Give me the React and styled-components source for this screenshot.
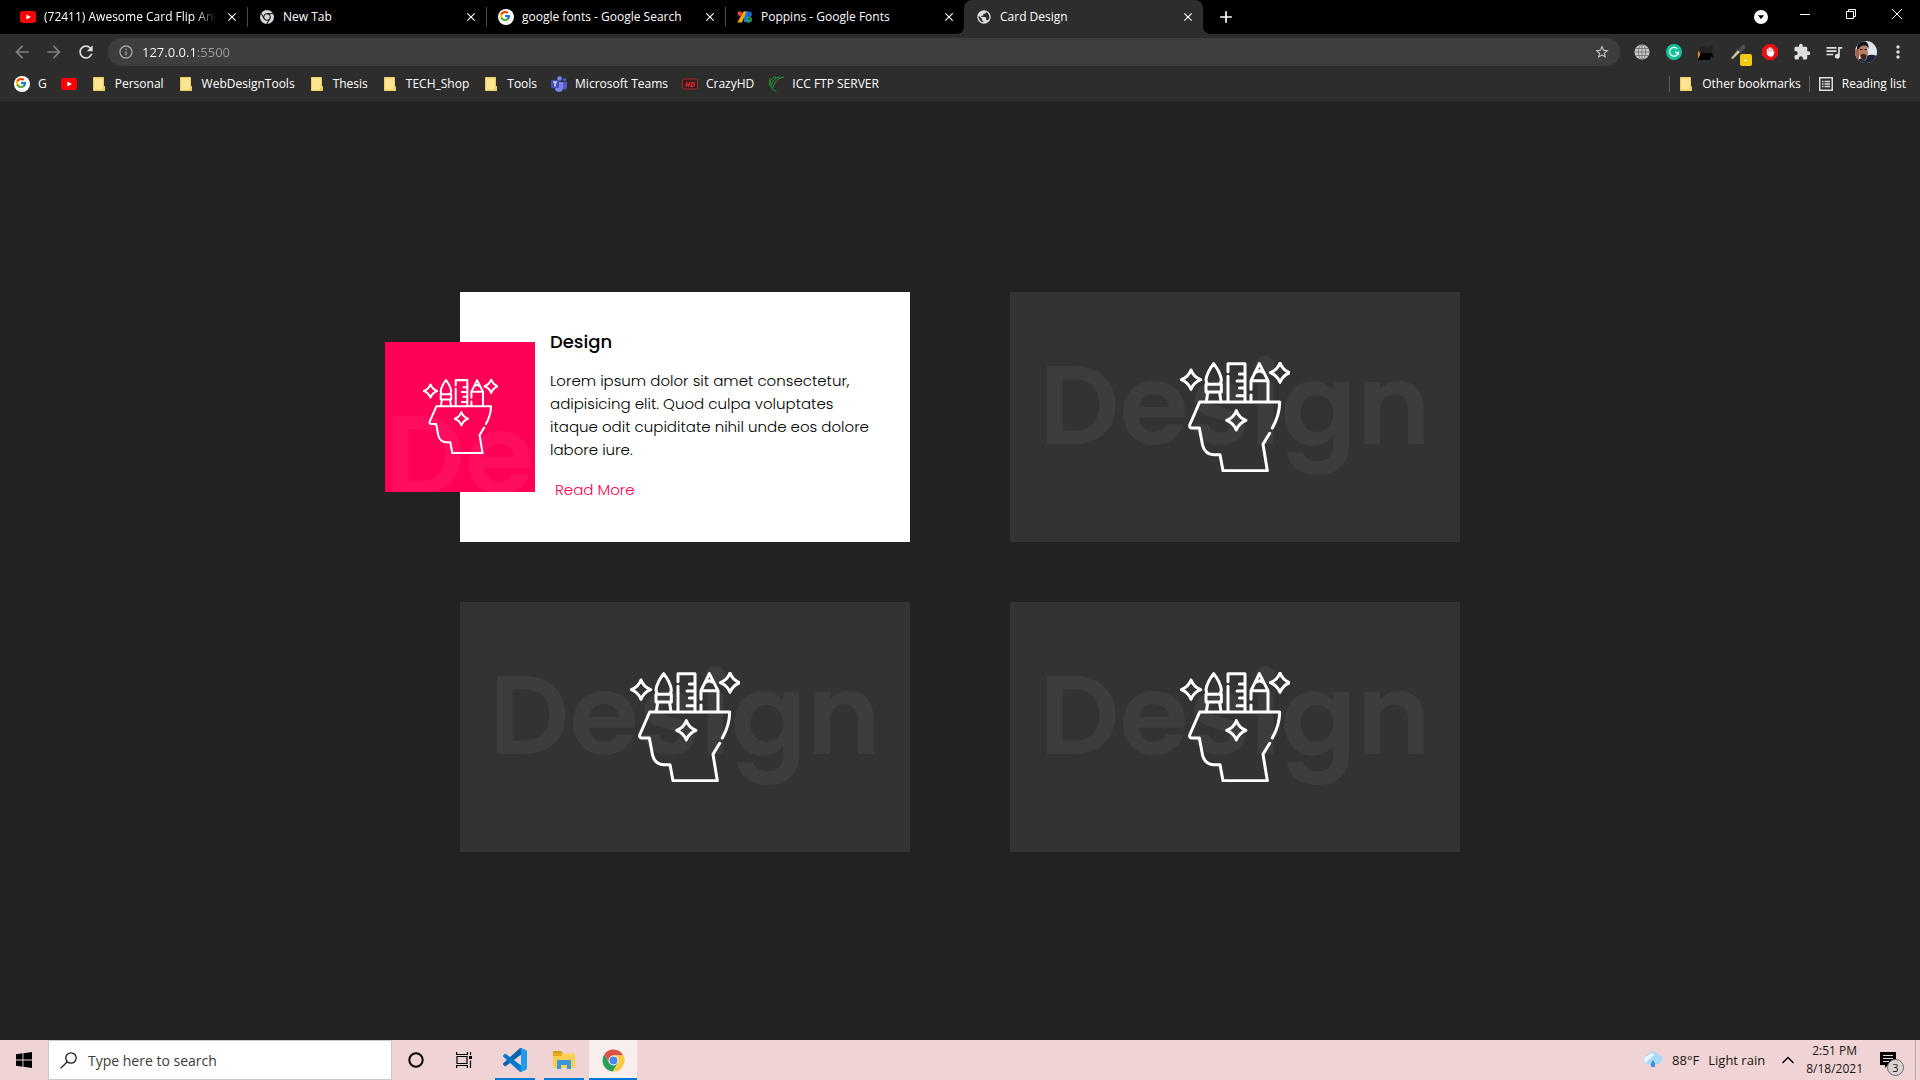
import React from "react";
import styled, { createGlobalStyle, css } from "styled-components";
import { FcGoogle } from "react-icons/fc";
import {
  MdAdd,
  MdArrowBack,
  MdArrowForward,
  MdClose,
  MdExtension,
  MdInfoOutline,
  MdMoreVert,
  MdPublic,
  MdQueueMusic,
  MdRefresh,
  MdStarBorder,
} from "react-icons/md";

const uiFont = `"Segoe UI", "Open Sans", "Noto Sans", sans-serif`;
const pageFont = `Poppins, Inter, "Open Sans", sans-serif`;

const GlobalStyle = createGlobalStyle`
  *, *::before, *::after { box-sizing: border-box; }
  body { margin: 0; background: #222222; font-family: ${uiFont}; }
  h1, h2, p { margin: 0; }
  button, input { font: inherit; color: inherit; border: 0; padding: 0; background: none; outline: none; }
  a { text-decoration: none; color: inherit; }
  svg { display: block; flex: none; }
`;

const Screen = styled.div`
  display: flex;
  flex-direction: column;
  min-height: 100vh;
`;

/* ---------- browser chrome ---------- */

const Browser = styled.header`
  background: #2d2d2d;
  border-bottom: 1px solid #242022;
  color: #ffffff;
  font-size: 12px;
`;

const TabStrip = styled.div`
  display: flex;
  height: 34px;
  padding-left: 8px;
  background: #000000;
`;

const Tab = styled.div`
  position: relative;
  display: flex;
  align-items: center;
  gap: 8px;
  width: 239px;
  padding: 0 7px 0 12px;

  ${(p) =>
    p.$divider &&
    css`
      background: linear-gradient(#4a4a4a, #4a4a4a) left center / 1px 20px no-repeat;
    `}

  ${(p) =>
    p.$active &&
    css`
      background: #2d2d2d;
      border-radius: 8px 8px 0 0;

      &::before,
      &::after {
        content: "";
        position: absolute;
        bottom: 0;
        width: 8px;
        height: 8px;
      }
      &::before {
        right: 100%;
        background: radial-gradient(circle at 0 0, #000000 8px, #2d2d2d 8px);
      }
      &::after {
        left: 100%;
        background: radial-gradient(circle at 100% 0, #000000 8px, #2d2d2d 8px);
      }
    `}
`;

const TabTitle = styled.button`
  display: flex;
  flex: 1;
  align-items: center;
  gap: 8px;
  min-width: 0;
  height: 100%;
  text-align: left;
`;

const TabText = styled.span`
  flex: 1;
  overflow: hidden;
  white-space: nowrap;
  line-height: 16px;
  mask-image: ${(p) => (p.$fade ? "linear-gradient(90deg, #000 88%, transparent)" : "none")};
`;

const IconButton = styled.button`
  display: grid;
  flex: none;
  place-items: center;
  width: ${(p) => p.$size || 32}px;
  height: ${(p) => p.$size || 32}px;
  color: ${(p) => p.$color || "#dedede"};
`;

const NewTab = styled(IconButton)`
  align-self: center;
  margin-left: 7px;
`;

const WindowControls = styled.div`
  display: flex;
  margin-left: auto;
`;

const WindowButton = styled.button`
  display: grid;
  place-items: center;
  width: 46px;
  height: 28px;
`;

const TabSearch = styled(WindowButton)`
  width: 42px;
  height: 34px;
`;

const Toolbar = styled.div`
  display: flex;
  align-items: center;
  height: 36px;
  padding: 0 6px;
`;

const AddressBar = styled.form`
  display: flex;
  flex: 1;
  align-items: center;
  height: 28px;
  margin: 0 6px;
  padding: 0 2px 0 10px;
  border-radius: 14px;
  background: #3e3e3e;
  color: #a6a6a6;
`;

const AddressInput = styled.input`
  flex: 1;
  min-width: 0;
  height: 28px;
  margin-left: 8px;
  font-size: 13px;
  color: transparent;
  background: linear-gradient(90deg, #ffffff ${(p) => p.$hostWidth}px, #9e9e9e ${(p) => p.$hostWidth}px);
  background-clip: text;
`;

const BookmarkBar = styled.nav`
  display: flex;
  align-items: center;
  gap: 14px;
  height: 32px;
  padding: 0 14px 4px;
`;

const Bookmark = styled.a`
  display: flex;
  align-items: center;
  gap: 8px;
  line-height: 16px;
  white-space: nowrap;
`;

const BookmarkEnd = styled.div`
  display: flex;
  align-items: center;
  gap: 8px;
  margin-left: auto;
`;

const BarDivider = styled.span`
  width: 1px;
  height: 16px;
  background: #5c5c5c;
`;

/* ---------- page ---------- */

const Page = styled.main`
  display: grid;
  flex: 1;
  place-content: center;
  grid-template-columns: repeat(2, 450px);
  gap: 60px 100px;
  font-family: ${pageFont};
`;

const Card = styled.article`
  position: relative;
  display: grid;
  height: 250px;
  background: ${(p) => (p.$open ? "#ffffff" : "#333333")};
`;

const Face = styled.div`
  display: grid;
  grid-template: 100% / 100%;
  overflow: hidden;
  place-items: center;
  background: #333333;

  > * {
    grid-area: 1 / 1;
  }

  ${(p) =>
    p.$open &&
    css`
      position: absolute;
      top: 50px;
      left: -75px;
      width: 150px;
      height: 150px;
      background: #ff0057;
    `}
`;

const Watermark = styled.span`
  align-self: start;
  justify-self: ${(p) => (p.$open ? "start" : "center")};
  margin-top: 29px;
  font-size: 112px;
  font-weight: 600;
  line-height: 168px;
  color: rgba(255, 255, 255, 0.05);
`;

const CardBody = styled.div`
  display: flex;
  flex-direction: column;
  align-items: flex-start;
  justify-content: center;
  padding: 0 30px 0 90px;
  color: #000000;
  font-size: 15px;
  font-weight: 300;
  line-height: 23px;
`;

const CardTitle = styled.h2`
  margin-bottom: 14px;
  font-size: 18px;
  font-weight: 500;
  line-height: 27px;
`;

const ReadMore = styled.a`
  margin-top: 12px;
  padding: 5px;
  color: #ff0057;
`;

/* ---------- taskbar ---------- */

const Taskbar = styled.footer`
  display: flex;
  height: 40px;
  background: #f0d4d5;
  color: #1a1414;
`;

const TaskButton = styled.button`
  display: grid;
  place-items: center;
  width: 48px;
  height: 40px;
`;

const AppList = styled.div`
  display: flex;
  gap: 1px;
  padding-left: 3px;
`;

const AppButton = styled(TaskButton)`
  position: relative;
  background: ${(p) => (p.$active ? "#f8eeee" : "none")};

  &::after {
    content: "";
    position: absolute;
    right: ${(p) => (p.$active ? 0 : 4)}px;
    bottom: 0;
    left: ${(p) => (p.$active ? 0 : 4)}px;
    height: 2px;
    background: #0078d7;
  }
`;

const Search = styled.label`
  display: flex;
  align-items: center;
  gap: 11px;
  width: 344px;
  padding-left: 11px;
  border: 1px solid #c9c6c6;
  background: #ffffff;
`;

const SearchInput = styled.input`
  flex: 1;
  min-width: 0;
  font-size: 14px;

  &::placeholder {
    color: #3c3c3c;
    opacity: 1;
  }
`;

const Tray = styled.div`
  display: flex;
  align-items: center;
  margin-left: auto;
`;

const Weather = styled.button`
  display: flex;
  align-items: center;
  gap: 9px;
  font-size: 13px;
  line-height: 20px;
`;

const TrayArrow = styled.button`
  margin: 0 12px 0 17px;
`;

const Clock = styled.time`
  font-size: 12px;
  line-height: 18px;
  text-align: center;
`;

const Notifications = styled.button`
  position: relative;
  width: 36px;
  height: 40px;
  margin: 0 8px 0 8px;
  padding-left: 9px;
`;

const Count = styled.span`
  position: absolute;
  top: 19px;
  right: 3px;
  width: 17px;
  height: 17px;
  border: 1px solid #6f6a6a;
  border-radius: 50%;
  background: #d9d3d3;
  font-size: 11px;
  line-height: 15px;
`;

const ShowDesktop = styled.button`
  width: 5px;
  height: 40px;
  border-left: 1px solid #b8a3a4;
`;

/* ---------- drawings ---------- */

const YouTubeIcon = () => (
  <svg width="16" height="16" viewBox="0 0 16 16">
    <rect y="2" width="16" height="12" rx="3" fill="#ff0000" />
    <path d="M6.3 5.4v5.2L11 8z" fill="#fff" />
  </svg>
);

const GoogleIcon = () => (
  <svg width="16" height="16" viewBox="0 0 16 16">
    <circle cx="8" cy="8" r="8" fill="#fff" />
    <FcGoogle x="1" y="1" width="14" height="14" />
  </svg>
);

const ChromeIcon = ({ size }) => (
  <svg width={size} height={size} viewBox="1 1 46 46">
    <path d="M24 24L5.54 12.03A22 22 0 0 1 43.6 14H24z" fill="#de5246" />
    <path d="M15.34 29L5.54 12.03A22 22 0 0 0 22.86 45.97L32.66 29 24 24z" fill="#27a05a" />
    <path d="M24 14h19.6A22 22 0 0 1 22.86 45.97L32.66 29 24 24z" fill="#fccb3c" />
    <path d="M5.54 12.03L15.34 29 24 24V14z" fill="#de5246" />
    <circle cx="24" cy="24" r="10" fill="#fff" />
    <circle cx="24" cy="24" r="8" fill="#4a88ee" />
  </svg>
);

const ChromeOutlineIcon = () => (
  <svg width="16" height="16" viewBox="0 0 48 48">
    <circle cx="24" cy="24" r="21" fill="#d6d6d6" />
    <g fill="none" stroke="#000" strokeWidth="3">
      <circle cx="24" cy="24" r="10" />
      <path d="M24 14h20M32.66 29L22.7 46.3M15.34 29L5.3 11.7" />
    </g>
    <circle cx="24" cy="24" r="6" fill="#d6d6d6" />
  </svg>
);

const FontsIcon = () => (
  <svg width="16" height="16" viewBox="0 0 16 16">
    <path d="M7 2.5h4V13H7z" fill="#1a73e8" />
    <path d="M6.5 2.5h3L5 13.5H.3z" fill="#f9ab00" />
    <circle cx="2.8" cy="4.6" r="2.3" fill="#ea4335" />
    <path d="M10 2.5h2.2a2.7 2.7 0 0 1 0 5.4H10z" fill="#1a63d0" />
    <path d="M10 7.6h2.6a3 3 0 0 1 0 5.9H10z" fill="#2f9e54" />
    <circle cx="12.3" cy="10" r="1.3" fill="#0d652d" />
  </svg>
);

const FolderIcon = () => (
  <svg width="16" height="16" viewBox="0 0 16 16">
    <path d="M2.5 1.5h10v9h1v4h-11z" fill="#ffe593" stroke="#f1cd5c" />
    <path d="M12 10.5h2V15h-3v-2.5h1z" fill="#f1cd5c" />
  </svg>
);

const TeamsIcon = () => (
  <svg width="16" height="16" viewBox="0 0 16 16">
    <circle cx="8.5" cy="2.6" r="2.4" fill="#7b83eb" />
    <circle cx="13.4" cy="3.6" r="1.6" fill="#5059c9" />
    <path d="M11 6h5v5a2.6 2.6 0 0 1-5 1z" fill="#5059c9" />
    <path d="M4 6h8v6a4 4 0 0 1-8 0z" fill="#7b83eb" />
    <rect y="4" width="8" height="8" rx="1" fill="#464eb8" />
    <path d="M2 6h4.2M4.1 6v4.5" stroke="#fff" strokeWidth="1.2" />
  </svg>
);

const HdIcon = () => (
  <svg width="16" height="16" viewBox="0 0 16 16">
    <rect x=".5" y="3" width="15" height="10" rx="1" fill="#3a1c1e" stroke="#9d2a2e" />
    <text x="8" y="10.500" fill="#d0262c" fontSize="7" fontWeight="800" fontStyle="italic" textAnchor="middle">
      HD
    </text>
  </svg>
);

const IccIcon = () => (
  <svg width="16" height="16" viewBox="0 0 16 16" fill="none" stroke="#2f9c3f">
    <path d="M8.5 15.5C3 14 .5 8.5 2 2" stroke="#1d6b2c" strokeWidth="1.6" />
    <path d="M1.5 9C2 4.500 4 1.5 8 .8M3 10.5C4 5 7 1.8 12 .8M5 12C6 6 10 2 16 1" />
  </svg>
);

const ReadingListIcon = () => (
  <svg width="16" height="16" viewBox="0 0 16 16" fill="none" stroke="#dedede">
    <rect x="1.75" y="1.75" width="12.5" height="12.5" strokeWidth="1.5" />
    <path d="M4 5.500h1.500M4 8h1.500M4 10.500h1.500M6.500 5.500H12M6.500 8H12M6.500 10.500H12" strokeWidth="1.5" />
  </svg>
);

const GridGlobeIcon = () => (
  <svg width="16" height="16" viewBox="0 0 16 16">
    <circle cx="8" cy="8" r="7.5" fill="#c9c9c9" />
    <g fill="none" stroke="#6b6b6b" strokeWidth=".8">
      <ellipse cx="8" cy="8" rx="3.6" ry="7.5" />
      <path d="M8 .5v15M.5 8h15M1.5 4.5h13M1.5 11.5h13" />
    </g>
  </svg>
);

const GrammarlyIcon = () => (
  <svg width="16" height="16" viewBox="0 0 16 16">
    <circle cx="8" cy="8" r="8" fill="#15c39a" />
    <path
      d="M11.3 4.9A4.4 4.4 0 1 0 12.3 8.5H9.3M12.3 8.5V11"
      fill="none"
      stroke="#fff"
      strokeWidth="1.3"
    />
  </svg>
);

const DarkBoxIcon = () => (
  <svg width="16" height="16" viewBox="0 0 16 16">
    <path d="M2 3l4-1 3 1 6-2-1 4 2 3-3 1H3z" fill="#222" />
    <path d="M0 7l2 2v2l-2 4z" fill="#f58a0b" />
    <path d="M3 9h11l2 5-3-2-1 4H0z" fill="#000" />
  </svg>
);

const PickerIcon = () => (
  <svg width="28" height="28" viewBox="0 0 28 28">
    <path d="M7 20l7-8 2 2-7 7z" fill="#d9cf8e" stroke="#777" strokeWidth=".7" />
    <path d="M13 10.500l4.500 4.500M15 12l3-4q2-2 3 0t-1 3l-3 3z" fill="#4a4f55" stroke="#4a4f55" />
    <rect x="16" y="16" width="12" height="12" rx="2" fill="#f5cb10" />
    <path d="M20 22.500h3" stroke="#fff" strokeWidth="1.2" />
  </svg>
);

const BlockerIcon = () => (
  <svg width="16" height="16" viewBox="0 0 16 16">
    <path d="M4.7 0h6.600L16 4.700v6.600L11.300 16H4.700L0 11.300V4.700z" fill="#e60f12" />
    <path d="M5.500 5.500v3M7.200 4v4M8.900 4v4M10.600 5.500V9" stroke="#fff" strokeWidth="1.4" strokeLinecap="round" />
    <path d="M4.800 8h6.500l.9-.9v2.300q-1 3.400-3.600 3.400T4.800 10z" fill="#fff" />
  </svg>
);

const Avatar = () => (
  <svg width="22" height="22" viewBox="0 0 22 22">
    <clipPath id="avatar-clip">
      <circle cx="11" cy="11" r="11" />
    </clipPath>
    <g clipPath="url(#avatar-clip)">
      <path d="M0 0h22v22H0z" fill="#dfe7ee" />
      <path d="M0 8h4v14H0z" fill="#a5624b" />
      <path d="M2 22q1-5 8-6 5-4 12-1v9z" fill="#1b2340" />
      <path d="M4 6q4-6 8 0l1 6q-1 8-4 8-4-2-5-8z" fill="#b27d64" />
      <path d="M2 8Q2 0 8 0q6 0 5.500 8Q12 4 9 4.500 5 4 4 8z" fill="#16131a" />
      <path d="M5.500 14q3-2 6 0 0 5-3 5.500-2-1-3-5.500z" fill="#3b2523" />
      <path d="M5 8.500h2.500M9.500 8.500H12" stroke="#2a1a18" />
    </g>
  </svg>
);

const spark = (x, y) =>
  `M${x} ${y - 29}Q${x + 8} ${y - 8} ${x + 29} ${y}Q${x + 8} ${y + 8} ${x} ${y + 29}Q${x - 8} ${y + 8} ${x - 29} ${y}Q${x - 8} ${y - 8} ${x} ${y - 29}z`;

const CreativeHead = ({ size }) => (
  <svg
    width={size}
    height={size}
    viewBox="90 65 330 330"
    fill="none"
    stroke="#fff"
    strokeWidth="9"
    strokeLinecap="round"
    strokeLinejoin="round"
  >
    <path d={spark(123, 118)} />
    <path d={spark(390, 97)} />
    <path d={spark(259, 240)} />
    <path d="M367 263Q389 224 389 185H149L119 254Q118 263 126 263H148L158 316Q166 343 192 343H210L219 391H352L339 312L359 279" />
    <path d="M191 70Q171 96 168 118Q170 132 176 132H206Q214 128 214 118Q211 96 191 70zM168 132H214V155H168zM173 157L169 184M209 157L213 184" />
    <path d="M234 94V70H285V184M234 108V184M268 101H285M261 122H285M268 143H285M261 166H285" />
    <path d="M303 147V121L328 70L354 121V184M303 121H354M303 164V184M319 95Q328 88 337 95" />
  </svg>
);

const VsCodeIcon = () => (
  <svg width="24" height="24" viewBox="0 0 100 100">
    <path
      d="M96.46 10.8L75.86.88C73.47-.27 70.62.21 68.75 2.08L1.3 63.58C-.52 65.24-.51 68.09 1.3 69.75L6.81 74.75C8.3 76.1 10.53 76.2 12.13 74.99L93.36 13.37C96.09 11.3 100 13.25 100 16.67V16.43C100 14.03 98.62 11.84 96.46 10.8z"
      fill="#0065a9"
    />
    <path
      d="M96.46 89.2L75.86 99.12C73.47 100.27 70.62 99.79 68.75 97.92L1.3 36.42C-.52 34.76-.51 31.91 1.3 30.25L6.81 25.25C8.3 23.9 10.53 23.8 12.13 25.01L93.36 86.63C96.09 88.7 100 86.75 100 83.33V83.57C100 85.97 98.62 88.16 96.46 89.2z"
      fill="#007acc"
    />
    <path
      d="M75.86 99.13C73.47 100.27 70.62 99.79 68.75 97.92C71.06 100.22 75 98.59 75 95.33V4.67C75 1.41 71.06-.22 68.75 2.08C70.62.21 73.47-.27 75.86.87L96.46 10.78C98.62 11.82 100 14.01 100 16.41V83.59C100 85.99 98.62 88.18 96.46 89.22z"
      fill="#1f9cf0"
    />
  </svg>
);

const ExplorerIcon = () => (
  <svg width="22" height="20" viewBox="0 0 22 20">
    <path d="M0 3V2q0-1 1-1h7l2 2.500V5H0z" fill="#d99b12" />
    <path d="M0 3.500h20q2 0 2 1.500v13H0z" fill="#fccf55" />
    <path d="M0 3.500h10L8 6H0z" fill="#e8a91a" />
    <path d="M4 11q0-1 1-1h12q1 0 1 1v8h-4v-4H8v4H4z" fill="#3c95d8" />
  </svg>
);

const WindowsIcon = () => (
  <svg width="16" height="16" viewBox="0 0 16 16">
    <path d="M0 2.200L6.500 1.300V7.500H0zM7.400 1.200L16 0V7.500H7.400zM0 8.500H6.500V14.700L0 13.800zM7.400 8.500H16V16L7.400 14.800z" fill="#000" />
  </svg>
);

const MagnifierIcon = () => (
  <svg width="17" height="17" viewBox="0 0 17 17" fill="none" stroke="#1c1c1c" strokeWidth="1.3">
    <circle cx="11" cy="6" r="5.2" />
    <path d="M7.300 9.700L.6 16.400" />
  </svg>
);

const TaskViewIcon = () => (
  <svg width="16" height="16" viewBox="0 0 16 16" fill="none" stroke="#000" strokeWidth="1.2">
    <path d="M1 4.500h10v7H1zM.6 0v2.500h10.800V0M.6 16v-2.500h10.800V16M14.500 0v3M14.500 8.500V16" />
    <path d="M13 4h3v3h-3z" fill="#000" stroke="none" />
  </svg>
);

const RainIcon = () => (
  <svg width="20" height="18" viewBox="0 0 20 18">
    <path d="M5 13a4.500 4.500 0 0 1 0-9A5.500 5.500 0 0 1 15 3.500 4.800 4.800 0 0 1 15.500 13z" fill="#a9d8f7" />
    <path d="M4 12a3.500 3.500 0 0 1 1-7 4 4 0 0 1 7-1q-4 1-4 4-3 0-4 4z" fill="#e6f5ff" />
    <path d="M10 9q2.500 3.500 2.200 5a2.200 2.200 0 0 1-4.400 0Q7.500 12.500 10 9z" fill="#3d90e0" />
  </svg>
);

const NoticeIcon = () => (
  <svg width="16" height="16" viewBox="0 0 16 16">
    <path d="M0 0h16v13H8l-3 3v-3H0z" fill="#000" />
    <path d="M3 3.500h10M3 6.500h10M3 9.500h6" stroke="#f0d4d5" strokeWidth="1.2" />
  </svg>
);

/* ---------- data ---------- */

const tabs = [
  { title: "(72411) Awesome Card Flip Anim", icon: <YouTubeIcon />, fade: true },
  { title: "New Tab", icon: <ChromeOutlineIcon />, divider: true },
  { title: "google fonts - Google Search", icon: <GoogleIcon />, divider: true },
  { title: "Poppins - Google Fonts", icon: <FontsIcon />, divider: true },
  { title: "Card Design", icon: <MdPublic size={16} color="#dedede" />, active: true },
];

const bookmarks = [
  { name: "G", icon: <GoogleIcon /> },
  { icon: <YouTubeIcon /> },
  { name: "Personal", icon: <FolderIcon /> },
  { name: "WebDesignTools", icon: <FolderIcon /> },
  { name: "Thesis", icon: <FolderIcon /> },
  { name: "TECH_Shop", icon: <FolderIcon /> },
  { name: "Tools", icon: <FolderIcon /> },
  { name: "Microsoft Teams", icon: <TeamsIcon /> },
  { name: "CrazyHD", icon: <HdIcon /> },
  { name: "ICC FTP SERVER", icon: <IccIcon /> },
];

const tools = [
  { label: "Site tools", icon: <GridGlobeIcon /> },
  { label: "Grammarly", icon: <GrammarlyIcon /> },
  { label: "Metrics", icon: <DarkBoxIcon /> },
  { label: "Color picker", icon: <PickerIcon /> },
  { label: "Ad blocker", icon: <BlockerIcon /> },
  { label: "Extensions", icon: <MdExtension size={18} /> },
  { label: "Media", icon: <MdQueueMusic size={20} /> },
  { label: "Profile", icon: <Avatar /> },
  { label: "Menu", icon: <MdMoreVert size={20} /> },
];

const cards = [{ open: true }, {}, {}, {}];

export default function App() {
  return (
    <Screen>
      <GlobalStyle />
      <Browser>
        <TabStrip>
          {tabs.map((tab) => (
            <Tab key={tab.title} $active={tab.active} $divider={tab.divider}>
              <TabTitle type="button">
                {tab.icon}
                <TabText $fade={tab.fade}>{tab.title}</TabText>
              </TabTitle>
              <IconButton type="button" aria-label="Close tab" $size={16} $color="#ffffff">
                <MdClose size={14} />
              </IconButton>
            </Tab>
          ))}
          <NewTab type="button" aria-label="New tab" $size={32} $color="#ffffff">
            <MdAdd size={20} />
          </NewTab>
          <WindowControls>
            <TabSearch type="button" aria-label="Search tabs">
              <svg width="14" height="14" viewBox="0 0 14 14">
                <circle cx="7" cy="7" r="7" fill="#fff" />
                <path d="M4 5.300h6L7 9.300z" fill="#000" />
              </svg>
            </TabSearch>
            <WindowButton type="button" aria-label="Minimize">
              <svg width="10" height="10" viewBox="0 0 10 10" stroke="#fff">
                <path d="M0 5.500h10" />
              </svg>
            </WindowButton>
            <WindowButton type="button" aria-label="Restore">
              <svg width="10" height="10" viewBox="0 0 10 10" fill="none" stroke="#fff">
                <path d="M.5 2.500h7v7h-7zM2.500 2.500v-2h7v7h-2" />
              </svg>
            </WindowButton>
            <WindowButton type="button" aria-label="Close">
              <svg width="10" height="10" viewBox="0 0 10 10" stroke="#fff">
                <path d="M0 0l10 10M10 0L0 10" />
              </svg>
            </WindowButton>
          </WindowControls>
        </TabStrip>

        <Toolbar>
          <IconButton type="button" aria-label="Back" $color="#7f7f7f">
            <MdArrowBack size={20} />
          </IconButton>
          <IconButton type="button" aria-label="Forward" $color="#7f7f7f">
            <MdArrowForward size={20} />
          </IconButton>
          <IconButton type="button" aria-label="Reload">
            <MdRefresh size={20} />
          </IconButton>
          <AddressBar>
            <MdInfoOutline size={16} />
            <AddressInput aria-label="Address" defaultValue="127.0.0.1:5500" $hostWidth={55} />
            <IconButton type="button" aria-label="Bookmark this page" $color="#c8c8c8">
              <MdStarBorder size={16} />
            </IconButton>
          </AddressBar>
          {tools.map((tool) => (
            <IconButton key={tool.label} type="button" aria-label={tool.label}>
              {tool.icon}
            </IconButton>
          ))}
        </Toolbar>

        <BookmarkBar>
          {bookmarks.map((item, i) => (
            <Bookmark key={i} href="#" aria-label={item.name || "YouTube"}>
              {item.icon}
              {item.name}
            </Bookmark>
          ))}
          <BookmarkEnd>
            <BarDivider />
            <Bookmark href="#">
              <FolderIcon />
              Other bookmarks
            </Bookmark>
            <BarDivider />
            <Bookmark href="#">
              <ReadingListIcon />
              Reading list
            </Bookmark>
          </BookmarkEnd>
        </BookmarkBar>
      </Browser>

      <Page>
        {cards.map((card, i) => (
          <Card key={i} $open={card.open}>
            <Face $open={card.open}>
              <Watermark $open={card.open}>Design</Watermark>
              <CreativeHead size={card.open ? 75 : 110} />
            </Face>
            {card.open && (
              <CardBody>
                <CardTitle>Design</CardTitle>
                <p>
                  Lorem ipsum dolor sit amet consectetur, adipisicing elit. Quod culpa voluptates itaque odit
                  cupiditate nihil unde eos dolore labore iure.
                </p>
                <ReadMore href="#">Read More</ReadMore>
              </CardBody>
            )}
          </Card>
        ))}
      </Page>

      <Taskbar>
        <TaskButton type="button" aria-label="Start">
          <WindowsIcon />
        </TaskButton>
        <Search>
          <MagnifierIcon />
          <SearchInput type="text" aria-label="Search" placeholder="Type here to search" />
        </Search>
        <TaskButton type="button" aria-label="Cortana">
          <svg width="16" height="16" viewBox="0 0 16 16">
            <circle cx="8" cy="8" r="6.700" fill="none" stroke="#000" strokeWidth="2" />
          </svg>
        </TaskButton>
        <TaskButton type="button" aria-label="Task view">
          <TaskViewIcon />
        </TaskButton>
        <AppList>
          <AppButton type="button" aria-label="Visual Studio Code">
            <VsCodeIcon />
          </AppButton>
          <AppButton type="button" aria-label="File Explorer">
            <ExplorerIcon />
          </AppButton>
          <AppButton type="button" aria-label="Google Chrome" $active>
            <ChromeIcon size={23} />
          </AppButton>
        </AppList>
        <Tray>
          <Weather type="button">
            <RainIcon />
            <span>88°F</span>
            <span>Light rain</span>
          </Weather>
          <TrayArrow type="button" aria-label="Show hidden icons">
            <svg width="12" height="8" viewBox="0 0 12 8" fill="none" stroke="#000" strokeWidth="1.3">
              <path d="M.5 7L6 1.500 11.500 7" />
            </svg>
          </TrayArrow>
          <Clock>
            2:51 PM
            <br />
            8/18/2021
          </Clock>
          <Notifications type="button" aria-label="Notifications">
            <NoticeIcon />
            <Count>3</Count>
          </Notifications>
          <ShowDesktop type="button" aria-label="Show desktop" />
        </Tray>
      </Taskbar>
    </Screen>
  );
}
